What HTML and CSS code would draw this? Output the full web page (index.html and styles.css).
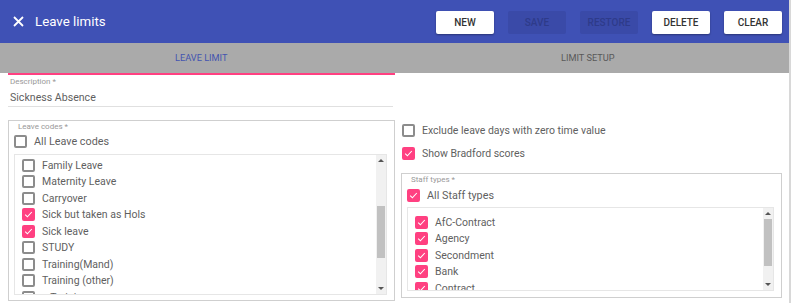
FILE: index.html
```html
<!DOCTYPE html>
<html lang="en">
<head>
    <meta charset="UTF-8">
    <meta name="viewport" content="width=device-width, initial-scale=1.0">
    <title>Leave limits</title>
    <link rel="stylesheet" href="styles.css">
</head>
<body>
<div class="page">
    <header class="toolbar">
        <svg class="close-icon" width="11" height="11" viewBox="0 0 11 11">
            <path d="M1 1 L10 10 M10 1 L1 10" stroke="#fff" stroke-width="1.8" fill="none"/>
        </svg>
        <span class="title">Leave limits</span>
        <div class="actions">
            <button class="btn">NEW</button>
            <button class="btn" disabled>SAVE</button>
            <button class="btn" disabled>RESTORE</button>
            <button class="btn">DELETE</button>
            <button class="btn">CLEAR</button>
        </div>
    </header>

    <nav class="tabbar">
        <div class="tab active">LEAVE LIMIT</div>
        <div class="tab">LIMIT SETUP</div>
    </nav>

    <main class="content">
        <div class="field">
            <div class="field-label">Description *</div>
            <div class="field-value">Sickness Absence</div>
        </div>
        <div></div>

        <section class="group group-leave">
            <div class="group-label">Leave codes *</div>
            <label class="check all-row"><span class="box"></span>All Leave codes</label>
            <div class="list list-leave">
                <div class="list-items">
                    <label class="check row"><span class="box"></span>Family Leave</label>
                    <label class="check row"><span class="box"></span>Maternity Leave</label>
                    <label class="check row"><span class="box"></span>Carryover</label>
                    <label class="check row"><span class="box on"><svg viewBox="0 0 13 13"><path d="M3.2 6.6 L5.4 8.8 L9.8 4"/></svg></span>Sick but taken as Hols</label>
                    <label class="check row"><span class="box on"><svg viewBox="0 0 13 13"><path d="M3.2 6.6 L5.4 8.8 L9.8 4"/></svg></span>Sick leave</label>
                    <label class="check row"><span class="box"></span>STUDY</label>
                    <label class="check row"><span class="box"></span>Training(Mand)</label>
                    <label class="check row"><span class="box"></span>Training (other)</label>
                    <label class="check row"><span class="box"></span>+ Training</label>
                </div>
                <div class="scrollbar">
                    <span class="arrow up"></span>
                    <span class="thumb" style="top: 51px; height: 52px;"></span>
                    <span class="arrow down"></span>
                </div>
            </div>
        </section>

        <section class="side">
            <label class="check option"><span class="box"></span>Exclude leave days with zero time value</label>
            <label class="check option"><span class="box on"><svg viewBox="0 0 13 13"><path d="M3.2 6.6 L5.4 8.8 L9.8 4"/></svg></span>Show Bradford scores</label>

            <div class="group group-staff">
                <div class="group-label">Staff types *</div>
                <label class="check all-row"><span class="box on"><svg viewBox="0 0 13 13"><path d="M3.2 6.6 L5.4 8.8 L9.8 4"/></svg></span>All Staff types</label>
                <div class="list list-staff">
                    <div class="list-items">
                        <label class="check row"><span class="box on"><svg viewBox="0 0 13 13"><path d="M3.2 6.6 L5.4 8.8 L9.8 4"/></svg></span>AfC-Contract</label>
                        <label class="check row"><span class="box on"><svg viewBox="0 0 13 13"><path d="M3.2 6.6 L5.4 8.8 L9.8 4"/></svg></span>Agency</label>
                        <label class="check row"><span class="box on"><svg viewBox="0 0 13 13"><path d="M3.2 6.6 L5.4 8.8 L9.8 4"/></svg></span>Secondment</label>
                        <label class="check row"><span class="box on"><svg viewBox="0 0 13 13"><path d="M3.2 6.6 L5.4 8.8 L9.8 4"/></svg></span>Bank</label>
                        <label class="check row"><span class="box on"><svg viewBox="0 0 13 13"><path d="M3.2 6.6 L5.4 8.8 L9.8 4"/></svg></span>Contract</label>
                    </div>
                    <div class="scrollbar">
                        <span class="arrow up"></span>
                        <span class="thumb" style="top: 11px; height: 47px;"></span>
                        <span class="arrow down"></span>
                    </div>
                </div>
            </div>
        </section>
    </main>
</div>
</body>
</html>
```

FILE: styles.css
```css
body {
    margin: 0;
    font-family: Roboto, "Liberation Sans", sans-serif;
    color: #5f5f5f;
    background: #fff;
}

.page {
    width: 789px;
    height: 303px;
    border-right: 2px solid #d8d8d8;
    overflow: hidden;
}

/* toolbar */
.toolbar {
    height: 43px;
    background: #3f51b5;
    display: flex;
    align-items: center;
    padding: 0 7px 0 13px;
}

.close-icon {
    display: block;
}

.title {
    margin-left: 11px;
    color: #fff;
    font-size: 13.3px;
}

.actions {
    margin-left: auto;
    display: flex;
    gap: 14px;
    padding-top: 1px;
}

.btn {
    width: 58px;
    height: 23px;
    border: none;
    border-radius: 2px;
    background: #fff;
    color: #333;
    font-family: inherit;
    font-size: 10px;
    font-weight: 500;
    padding: 0;
    box-shadow: 0 1px 2px rgba(0, 0, 0, 0.35);
}

.btn:disabled {
    background: #3a4aa8;
    color: #2e3b8a;
    box-shadow: none;
}

/* tabs */
.tabbar {
    display: flex;
    padding: 0 8px;
    background: linear-gradient(#aaa, #aaa) top / 100% 30px no-repeat;
}

.tab {
    flex: 1;
    height: 30px;
    line-height: 30px;
    text-align: center;
    font-size: 9.2px;
    color: #595959;
    border-bottom: 2px solid transparent;
}

.tab.active {
    color: #4354b0;
    border-bottom-color: #ff4081;
}

/* content */
.content {
    display: grid;
    grid-template-columns: 387px 1fr;
    column-gap: 6px;
    row-gap: 13px;
    padding: 2px 7px 0 8px;
}

.field {
    margin-right: 2px;
    border-bottom: 1px solid #e0e0e0;
    padding-left: 2px;
}

.field-label {
    font-size: 8px;
    line-height: 10px;
    color: #999;
}

.field-value {
    font-size: 10.6px;
    line-height: 17px;
    padding-top: 2px;
    color: #5f5f5f;
}

.group {
    border: 1px solid #cfcfcf;
    padding: 1px 7px 5px 5px;
}

.group-staff {
    height: 125px;
    box-sizing: border-box;
    margin-top: 10px;
}

.group-label {
    font-size: 8px;
    line-height: 10px;
    color: #999;
    padding-left: 4px;
}

.check {
    display: flex;
    align-items: center;
    font-size: 10.5px;
    color: #5f5f5f;
    white-space: nowrap;
}

.box {
    flex: none;
    width: 13px;
    height: 13px;
    box-sizing: border-box;
    border: 2px solid #8c8c8c;
    border-radius: 2px;
    margin-right: 7px;
    display: flex;
}

.box.on {
    background: #ff4081;
    border-color: #ff4081;
}

.box svg {
    width: 13px;
    height: 13px;
    margin: -2px;
    fill: none;
    stroke: #fff;
    stroke-width: 1.1;
}

.all-row {
    height: 16px;
    margin-top: 1px;
    font-size: 10.8px;
}

.group-staff .all-row {
    margin-top: 2px;
}

.list {
    margin-top: 5px;
    border: 1px solid #e6e6e6;
    display: flex;
}

.group-staff .list {
    margin-top: 4px;
}

.list-leave {
    height: 141px;
    box-sizing: border-box;
}

.list-staff {
    height: 84px;
    box-sizing: border-box;
}

.list-items {
    flex: 1;
    overflow: hidden;
    padding-left: 7px;
}

.list-leave .list-items {
    padding-top: 2px;
}

.list-staff .list-items {
    padding-top: 6px;
}

.row {
    height: 16.5px;
}

.scrollbar {
    position: relative;
    width: 10px;
    background: #f1f1f1;
}

.thumb {
    position: absolute;
    left: 1px;
    right: 1px;
    background: #c1c1c1;
}

.arrow {
    position: absolute;
    left: 2px;
    width: 0;
    height: 0;
    border-left: 3px solid transparent;
    border-right: 3px solid transparent;
}

.arrow.up {
    top: 4px;
    border-bottom: 3px solid #555;
}

.arrow.down {
    bottom: 4px;
    border-top: 3px solid #555;
}

.side {
    display: flex;
    flex-direction: column;
}

.option {
    height: 20px;
    margin-left: 1px;
}

.option + .option {
    margin-top: 3px;
}
```
